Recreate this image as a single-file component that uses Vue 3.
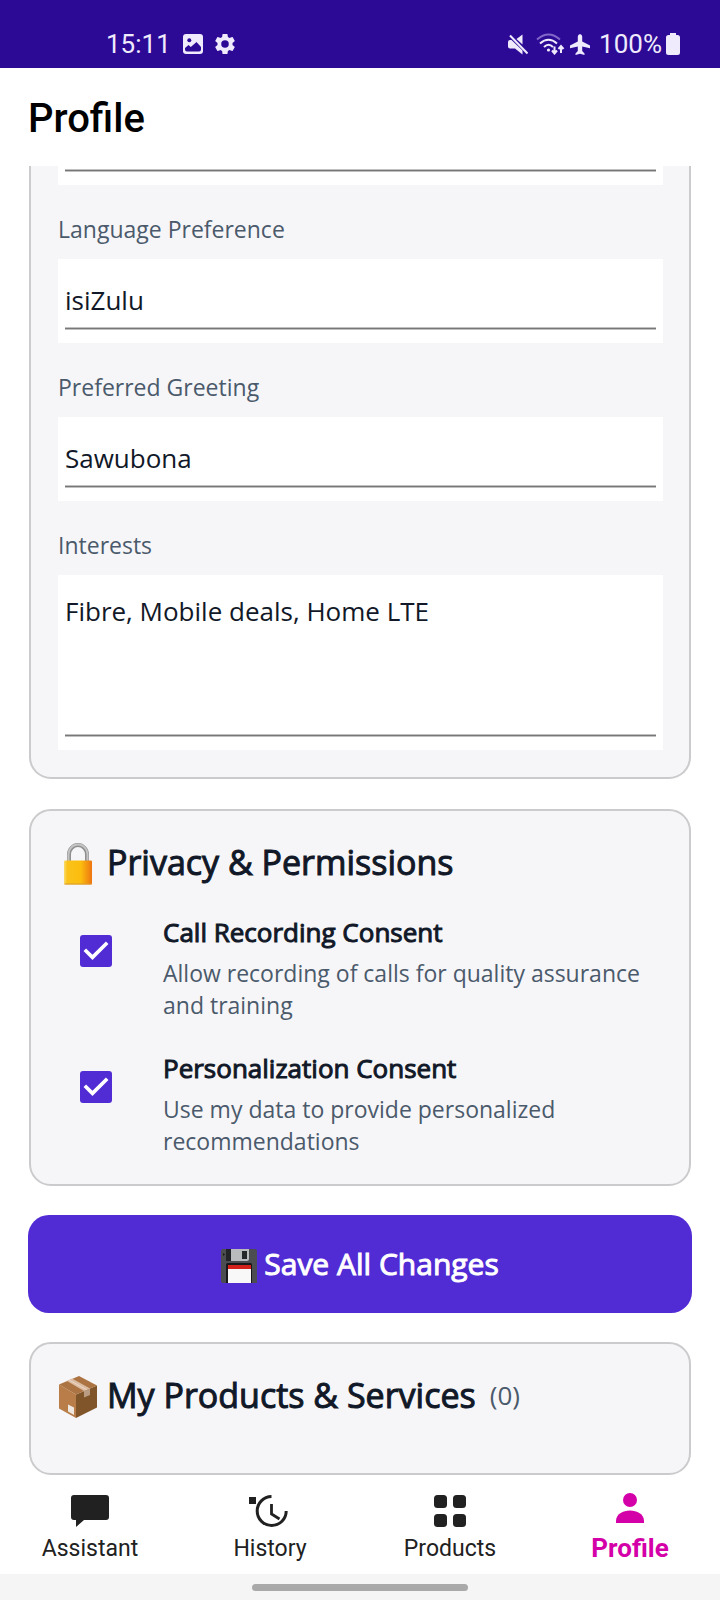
<script setup>
import { ref } from 'vue'

const language = ref('isiZulu')
const greeting = ref('Sawubona')
const interests = ref('Fibre, Mobile deals, Home LTE')
const previous = ref('')

const consents = ref([
  {
    id: 'call-recording',
    title: 'Call Recording Consent',
    text: 'Allow recording of calls for quality assurance and training',
    checked: true,
  },
  {
    id: 'personalization',
    title: 'Personalization Consent',
    text: 'Use my data to provide personalized recommendations',
    checked: true,
  },
])
</script>

<template>
  <div class="screen">
    <div class="status">
      <div class="status-group">
        <span>15:11</span>
        <svg class="s-image" width="20" height="20" viewBox="0 0 20 20">
          <rect width="20" height="20" rx="3" fill="#efeafc" />
          <circle cx="6.3" cy="6.3" r="2" fill="#2c0a96" />
          <path d="M2 15.5V14l3.5-3 2.3 2L13.5 8l4.5 5v2.500q0 2-2 2H4q-2 0-2-2z" fill="#2c0a96" />
        </svg>
        <svg class="s-gear" width="22" height="22" viewBox="1.500 1.500 21 21">
          <path fill="#efeafc" fill-rule="evenodd" d="M19.14 12.94c.04-.3.06-.61.06-.94 0-.32-.02-.64-.07-.94l2.030-1.580a.49.49 0 0 0 .12-.61l-1.920-3.320a.49.49 0 0 0-.59-.22l-2.390.96c-.5-.38-1.030-.7-1.620-.94l-.36-2.540a.48.48 0 0 0-.48-.41h-3.840a.47.47 0 0 0-.47.41l-.36 2.540c-.59.24-1.130.57-1.620.94l-2.390-.96a.48.48 0 0 0-.59.22L2.740 8.870a.47.47 0 0 0 .12.61l2.030 1.580c-.05.3-.09.63-.09.94s.02.64.07.94l-2.030 1.580a.49.49 0 0 0-.12.61l1.920 3.320c.12.22.37.29.59.22l2.390-.96c.5.38 1.030.7 1.620.94l.36 2.540c.05.24.24.41.48.41h3.840c.24 0 .44-.17.47-.41l.36-2.540c.59-.24 1.130-.56 1.620-.94l2.390.96c.22.08.47 0 .59-.22l1.920-3.320a.47.47 0 0 0-.12-.61zM12 15.600a3.600 3.600 0 1 1 0-7.200 3.600 3.600 0 0 1 0 7.200z" />
        </svg>
      </div>
      <div class="status-group">
        <svg width="20" height="21" viewBox="0 0 20 21" fill="#efeafc">
          <path d="M14.500 0.500V10.500L8.500 5z" />
          <path d="M2 6h1.500L14.500 16.500V20.500L7 14.500H2Q0 14.500 0 12.500V8Q0 6 2 6z" />
          <path d="M2 1.500L19.500 19.500" stroke="#efeafc" stroke-width="2" />
        </svg>
        <svg class="s-wifi" width="30" height="22" viewBox="0 0 30 22" fill="none" stroke="#efeafc" stroke-width="2">
          <path d="M1 6.500Q12.500-3.500 24 6.500" stroke="#8468c8" />
          <path d="M4 10.500Q12.500 3 21 10.500" />
          <path d="M8 14Q12.500 9.500 17 14" />
          <circle cx="12.500" cy="17" r="1.600" fill="#efeafc" stroke="none" />
          <path d="M18.500 13.500V20M16 17.500L18.500 20.500 21 17.500M25 20V13M22.500 16L25 13 27.500 16" />
        </svg>
        <svg width="20" height="21" viewBox="0 0 20 21" fill="#efeafc">
          <path d="M10 0Q12.200.5 12.200 2.500V7.500L20 11.500V14.300L12.200 12.500V17L14.500 19.500V21L10 19.700 5.500 21V19.500L7.800 17V12.500L0 14.300V11.500L7.800 7.500V2.500Q7.800.5 10 0z" />
        </svg>
        <span class="battery-text">100%</span>
        <svg class="s-battery" width="14" height="22" viewBox="0 0 14 22" fill="#efeafc">
          <path d="M4 0h6v2h1.500q2.500 0 2.500 2.500v15q0 2.500-2.500 2.500h-9Q0 22 0 19.500V4.500q0-2.500 2.500-2.500H4z" />
        </svg>
      </div>
    </div>

    <header class="topbar"><h1>Profile</h1></header>

    <main class="content">
      <section class="card card-open">
        <div class="cut">
          <div class="box"><input v-model="previous" type="text" aria-label="Profile detail" /></div>
        </div>
        <label for="language">Language Preference</label>
        <div class="box"><input id="language" v-model="language" type="text" /></div>
        <label for="greeting">Preferred Greeting</label>
        <div class="box"><input id="greeting" v-model="greeting" type="text" /></div>
        <label for="interests">Interests</label>
        <div class="box"><textarea id="interests" v-model="interests"></textarea></div>
      </section>

      <section class="card">
        <h2>
          <svg width="40" height="42" viewBox="0 0 40 42">
            <defs>
              <linearGradient id="lock-body" x1="0" x2="1" y1="0" y2="0">
                <stop offset="0" stop-color="#f9dc6b" />
                <stop offset=".12" stop-color="#fbc21a" />
                <stop offset=".6" stop-color="#fbbd0e" />
                <stop offset="1" stop-color="#ee7512" />
              </linearGradient>
            </defs>
            <path d="M11 19V11.500a9 9.500 0 0 1 18 0V19" fill="none" stroke="#8f8f8f" stroke-width="4" />
            <path d="M10.500 19V11.500a9.500 10 0 0 1 19 0V19" fill="none" stroke="#c4c4c4" stroke-width="2" />
            <rect x="6" y="17.500" width="28" height="24" rx="1" fill="url(#lock-body)" />
            <path d="M6.500 41h27" stroke="#d99a30" />
          </svg>
          <span>Privacy &amp; Permissions</span>
        </h2>
        <div v-for="item in consents" :key="item.id" class="consent">
          <input :id="item.id" v-model="item.checked" type="checkbox" />
          <label :for="item.id">
            <span class="consent-title">{{ item.title }}</span>
            <span class="consent-text">{{ item.text }}</span>
          </label>
        </div>
      </section>

      <button class="save" type="button">
        <svg width="36" height="34" viewBox="0 0 36 34">
          <path d="M1 0h33q2 0 2 2v32H2q-2 0-2-2V2z" fill="#4b4d50" />
          <path d="M5 0h5v12H5z" fill="#222326" />
          <path d="M10 0h18v10q0 2-2 2H10z" fill="#b9bbbd" />
          <rect x="21" y="2" width="5" height="8" fill="#26272a" />
          <path d="M2 4l2 1.500L2 7z" fill="#17181a" />
          <path d="M5 15.500q0-1.500 1.500-1.500h23q1.500 0 1.500 1.500V34H5z" fill="#17181a" />
          <rect x="7" y="16" width="23" height="18" fill="#f8f8f8" />
          <rect x="7" y="16" width="23" height="4" fill="#d3201b" />
        </svg>
        <span>Save All Changes</span>
      </button>

      <section class="card card-products">
        <h2>
          <svg width="40" height="42" viewBox="0 0 40 42">
            <path d="M1 8.500L18 18.500V42L1 32.500z" fill="#b87d48" />
            <path d="M39 9.500L18 18.500V42L39 31.500z" fill="#80552a" />
            <path d="M21 0L39 9.500 18 18.500 1 8.500z" fill="#ac7443" />
            <path d="M9 5l5-2.500L32 12.500 26 15z" fill="#dcbda4" />
            <path d="M11 4L29 14" stroke="#ecd7c5" stroke-width="1" />
            <path d="M26 15l6-2.500V19l-6 2.500z" fill="#b99c81" />
            <path d="M10 28.500l6 3V39l-6-3.500z" fill="#eee8e0" />
          </svg>
          <span>My Products &amp; Services</span>
          <small>(0)</small>
        </h2>
      </section>
    </main>

    <nav class="tabs">
      <a href="#assistant">
        <svg width="40" height="32" viewBox="0 0 40 32" fill="#212121">
          <path d="M4 0h32q3 0 3 3v19q0 3-3 3H14l-8 7v-7H4q-3 0-3-3V3q0-3 3-3z" />
        </svg>
        <span>Assistant</span>
      </a>
      <a href="#history">
        <svg width="40" height="32" viewBox="0 0 40 32">
          <rect x="-1" y="2" width="7" height="7" fill="#212121" />
          <path d="M21.500 1.500A14.500 14.500 0 1 0 36.200 16" fill="none" stroke="#212121" stroke-width="3" />
          <path d="M21.500 9V19L29.500 24" fill="none" stroke="#212121" stroke-width="2.800" />
        </svg>
        <span>History</span>
      </a>
      <a href="#products">
        <svg width="40" height="32" viewBox="0 0 40 32" fill="#212121">
          <rect x="4" y="0" width="13" height="13" rx="3.500" />
          <rect x="23" y="0" width="13" height="13" rx="3.500" />
          <rect x="4" y="19" width="13" height="13" rx="3.500" />
          <rect x="23" y="19" width="13" height="13" rx="3.500" />
        </svg>
        <span>Products</span>
      </a>
      <a href="#profile" class="active" aria-current="page">
        <svg width="40" height="32" viewBox="0 0 40 32" fill="#d400a8">
          <circle cx="20" cy="7" r="7" />
          <path d="M6 30v-2C6 21 13 17.500 20 17.500S34 21 34 28v2z" />
        </svg>
        <span>Profile</span>
      </a>
    </nav>
    <div class="gesture"><i></i></div>
  </div>
</template>

<style>
body {
  margin: 0;
  background: #fff;
}
</style>

<style scoped>
* {
  box-sizing: border-box;
}
.screen {
  display: flex;
  flex-direction: column;
  height: 100vh;
  background: #fff;
  color: #111827;
  font-family: "Open Sans", "Noto Sans", sans-serif;
}
.status {
  display: flex;
  justify-content: space-between;
  padding: 20px 40px 0 106px;
  height: 68px;
  background: #2c0a96;
  color: #efeafc;
  font: 26px/48px Roboto, sans-serif;
}
.status-group {
  display: flex;
  align-items: center;
}
.s-image {
  margin-left: 12px;
}
.s-gear {
  margin-left: 11px;
}
.s-wifi {
  margin-left: 8px;
  margin-right: 4px;
}
.battery-text {
  margin-left: 9px;
}
.s-battery {
  margin-left: 4px;
}
.topbar {
  display: flex;
  align-items: center;
  flex: none;
  height: 98px;
  padding: 4px 28px 0;
}
h1 {
  margin: 0;
  color: #000;
  font: 500 40px/48px Roboto, sans-serif;
}
.content {
  flex: 1;
  min-height: 0;
  padding: 0 28px;
  overflow-y: auto;
  scrollbar-width: none;
}
.card {
  margin: 0 1px;
  padding: 27px 26px 27px 27px;
  border: 2px solid #cbcbcd;
  border-radius: 22px;
  background: #f6f6f9;
}
.card-open {
  margin-bottom: 30px;
  padding-top: 0;
  border-top: 0;
  border-radius: 0 0 22px 22px;
}
.cut {
  display: flex;
  flex-direction: column;
  justify-content: flex-end;
  height: 19px;
  overflow: hidden;
}
.card-open > label {
  display: block;
  margin: 28px 0 14px;
  color: #4b5a6b;
  font-size: 23px;
  line-height: 32px;
}
.box {
  padding: 0 7px 13px;
  background: #fff;
}
.box input,
.box textarea {
  display: block;
  width: 100%;
  height: 71px;
  margin: 0;
  padding: 11px 0 0;
  border: 0;
  border-radius: 0;
  outline: 0;
  background: linear-gradient(#c0c0c0 0 1px, #777 1px 2px, #c0c0c0 2px 3px) bottom / 100% 3px no-repeat;
  color: #111827;
  font: 26px/36px "Open Sans", "Noto Sans", sans-serif;
}
.box textarea {
  height: 162px;
  padding-top: 18px;
  resize: none;
}
h2 {
  display: flex;
  align-items: center;
  margin: 0;
  font-size: 34px;
  font-weight: 400;
  line-height: 48px;
  -webkit-text-stroke: 1px currentColor;
}
h2 svg {
  flex: none;
  margin: 4px 9px 0 0;
}
h2 small {
  margin-left: 14px;
  color: #4b5a6b;
  font-size: 26px;
  -webkit-text-stroke: 0;
}
.consent {
  display: flex;
  align-items: flex-start;
  margin-top: 28px;
}
.consent + .consent {
  margin-top: 29px;
}
.consent input {
  flex: none;
  display: block;
  width: 32px;
  height: 32px;
  margin: 21px 51px 0 22px;
  border-radius: 3px;
  background: #512bd4;
  appearance: none;
}
.consent input:checked::after {
  content: "";
  display: block;
  height: 32px;
  background: #fff;
  clip-path: polygon(39% 78%, 11% 50%, 19% 42%, 39% 62%, 81% 20%, 89% 28%);
}
.consent label,
.consent-title,
.consent-text {
  display: block;
}
.consent-title {
  margin-bottom: 7px;
  font-size: 26px;
  line-height: 36px;
  -webkit-text-stroke: 1px currentColor;
}
.consent-text {
  color: #4b5a6b;
  font-size: 23px;
  line-height: 32px;
}
.save {
  display: flex;
  align-items: center;
  justify-content: center;
  gap: 7px;
  width: 100%;
  height: 98px;
  margin: 29px 0;
  border: 0;
  border-radius: 21px;
  background: #512bd4;
  color: #fff;
  font: 30px/42px "Open Sans", "Noto Sans", sans-serif;
  -webkit-text-stroke: 1px currentColor;
}
.save svg {
  margin-top: 4px;
}
.card-products {
  height: 133px;
}
.tabs {
  display: grid;
  grid-template-columns: repeat(4, 1fr);
  flex: none;
  height: 99px;
}
.tabs a {
  display: flex;
  flex-direction: column;
  align-items: center;
  gap: 5px;
  padding-top: 20px;
  color: #212121;
  font: 23px/34px Roboto, sans-serif;
  text-decoration: none;
}
.tabs svg {
  overflow: visible;
}
.tabs a.active {
  gap: 6px;
  padding-top: 18px;
  color: #d400a8;
  font-size: 26px;
  font-weight: 700;
}
.gesture {
  display: flex;
  justify-content: center;
  flex: none;
  height: 26px;
  padding-top: 10px;
  background: #f5f5f5;
}
.gesture i {
  width: 30%;
  height: 7px;
  border-radius: 4px;
  background: #a9a9a9;
}
</style>
